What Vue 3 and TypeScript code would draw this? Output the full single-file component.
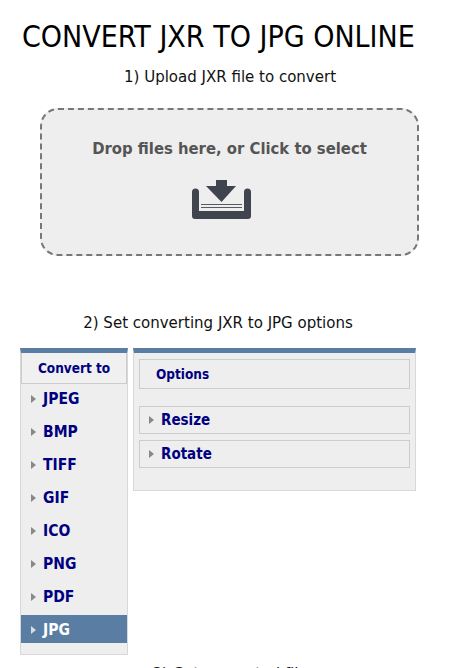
<script setup lang="ts">
const formats: string[] = ['JPEG', 'BMP', 'TIFF', 'GIF', 'ICO', 'PNG', 'PDF', 'JPG']
const options: string[] = ['Resize', 'Rotate']
</script>

<template>
  <main class="page">
    <h1 class="title">CONVERT JXR TO JPG ONLINE</h1>
    <p class="step step-one">1) Upload JXR file to convert</p>
    <section class="drop">
      <div class="drop-text">Drop files here, or Click to select</div>
      <svg class="drop-icon" width="61" height="40" viewBox="0 0 61 40">
        <path d="M25 0h11v6h9L30.500 22 15 6h10z" fill="#3f444f" />
        <path d="M1 12a3.500 3.500 0 0 1 7 0V31h45V12a3.500 3.500 0 0 1 7 0V36a3 3 0 0 1-3 3H4a3 3 0 0 1-3-3z" fill="#3f444f" />
        <path d="M10 24.500h41M10 27.500h41" stroke="#555a64" stroke-width="1.200" fill="none" />
      </svg>
    </section>
    <p class="step step-two">2) Set converting JXR to JPG options</p>
    <section class="panels">
      <nav class="side">
        <div class="side-head">Convert to</div>
        <a v-for="f in formats" :key="f" class="fmt" :class="{ active: f === 'JPG' }">
          <span class="arrow"></span>{{ f }}
        </a>
      </nav>
      <div class="opts">
        <div class="opts-head">Options</div>
        <div class="opt-list">
          <div v-for="o in options" :key="o" class="opt"><span class="arrow"></span>{{ o }}</div>
        </div>
      </div>
    </section>
    <p class="step step-three">3) Get converted file</p>
  </main>
</template>

<style>
html, body { margin: 0; height: 668px; overflow: hidden; background: #fff; }
</style>

<style scoped>
.page {
  width: 450px;
  font-family: "DejaVu Sans", sans-serif;
  font-stretch: condensed;
  color: #111;
}
.title {
  margin: 0;
  padding: 20px 0 0 22px;
  font-size: 30px;
  line-height: 34px;
  font-weight: 400;
  white-space: nowrap;
  color: #000;
}
.step { margin: 0; font-size: 16.700px; line-height: 20px; text-align: center; }
.step-one { padding: 12px 0 0 10px; }
.drop {
  box-sizing: border-box;
  margin: 22px 0 0 40px;
  width: 379px;
  height: 148px;
  border: 2px dashed #777;
  border-radius: 18px;
  background: #eee;
  display: flex;
  flex-direction: column;
  align-items: center;
  padding-top: 28px;
}
.drop-text { font-size: 16.500px; line-height: 22px; font-weight: 700; color: #555; }
.drop-icon { margin: 20px 16px 0 0; }
.step-two { padding: 56px 0 0 0; width: 436px; }
.panels { display: flex; align-items: flex-start; gap: 5px; margin: 16px 0 0 20px; }
.side {
  box-sizing: border-box;
  width: 108px;
  height: 307px;
  border: 1px solid #d8d8d8;
  border-top: 5px solid #5a7ea3;
  background: #eee;
}
.side-head {
  box-sizing: border-box;
  height: 31px;
  border: 1px solid #ccc;
  border-top: 0;
  background: #f0f0f0;
  text-align: center;
  font-size: 13.500px;
  line-height: 30px;
  font-weight: 700;
  color: #000080;
}
.fmt {
  display: flex;
  align-items: center;
  height: 33px;
  padding: 0 0 4px 10px;
  font-size: 15.500px;
  font-weight: 700;
  color: #000080;
  box-sizing: border-box;
}
.fmt.active { background: #5a7ea3; color: #fff; height: 28px; padding: 1px 0 0 10px; }
.fmt.active .arrow { border-left-color: #ddd; }
.arrow {
  width: 0;
  height: 0;
  border-top: 4px solid transparent;
  border-bottom: 4px solid transparent;
  border-left: 5px solid #888;
  margin-right: 7px;
  flex: none;
}
.opts {
  box-sizing: border-box;
  width: 283px;
  height: 143px;
  border: 1px solid #d8d8d8;
  border-top: 5px solid #5a7ea3;
  background: #eee;
  padding: 6px 5px 0 5px;
}
.opts-head {
  box-sizing: border-box;
  height: 30px;
  border: 1px solid #ccc;
  padding-left: 16px;
  font-size: 13.500px;
  line-height: 28px;
  font-weight: 700;
  color: #000080;
}
.opt-list { display: flex; flex-direction: column; gap: 6px; margin-top: 17px; }
.opt {
  box-sizing: border-box;
  height: 28px;
  border: 1px solid #ccc;
  display: flex;
  align-items: center;
  padding-left: 9px;
  font-size: 15px;
  font-weight: 700;
  color: #000080;
}
.step-three { padding: 8px 0 0 10px; }
</style>
